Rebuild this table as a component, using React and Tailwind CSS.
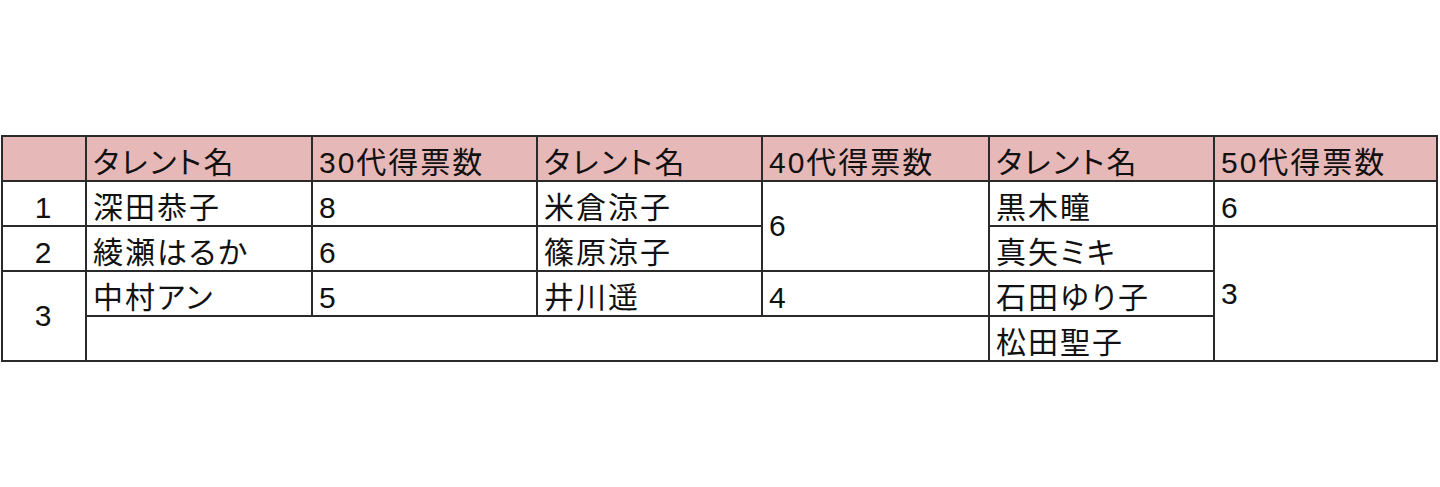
const header = ['', 'タレント名', '30代得票数', 'タレント名', '40代得票数', 'タレント名', '50代得票数'];

const base = 'border-2 border-[#2a2a2a] h-[45px] px-[6px] leading-none tracking-[2px]';
const cell = `${base} align-bottom pb-[2px] text-left`;
const mid = `${base} align-middle text-left`;
const num = `${base} align-bottom pb-[2px] text-center`;

export default function App() {
  return (
    <div
      className="w-[1440px] h-[487px] bg-white pt-[135px] pl-[1px]"
      style={{ fontFamily: '"Liberation Sans", "Noto Sans CJK JP", sans-serif', fontFeatureSettings: '"palt"' }}
    >
      <table className="border-collapse table-fixed text-[30px] text-[#111]">
        <colgroup>
          <col className="w-[84px]" />
          <col className="w-[226px]" />
          <col className="w-[225px]" />
          <col className="w-[225px]" />
          <col className="w-[227px]" />
          <col className="w-[225px]" />
          <col className="w-[223px]" />
        </colgroup>
        <thead>
          <tr className="bg-[#e6b8b7]">
            {header.map((h, i) => (
              <th key={i} className={`${cell} font-normal`}>{h}</th>
            ))}
          </tr>
        </thead>
        <tbody>
          <tr>
            <td className={num}>1</td>
            <td className={cell}>深田恭子</td>
            <td className={cell}>8</td>
            <td className={cell}>米倉涼子</td>
            <td rowSpan={2} className={mid}>6</td>
            <td className={cell}>黒木瞳</td>
            <td className={cell}>6</td>
          </tr>
          <tr>
            <td className={num}>2</td>
            <td className={cell}>綾瀬はるか</td>
            <td className={cell}>6</td>
            <td className={cell}>篠原涼子</td>
            <td className={cell}>真矢ミキ</td>
            <td rowSpan={3} className={mid}>3</td>
          </tr>
          <tr>
            <td rowSpan={2} className={`${base} align-middle text-center`}>3</td>
            <td className={cell}>中村アン</td>
            <td className={cell}>5</td>
            <td className={cell}>井川遥</td>
            <td className={cell}>4</td>
            <td className={cell}>石田ゆり子</td>
          </tr>
          <tr>
            <td colSpan={4} className={cell}></td>
            <td className={cell}>松田聖子</td>
          </tr>
        </tbody>
      </table>
    </div>
  );
}
